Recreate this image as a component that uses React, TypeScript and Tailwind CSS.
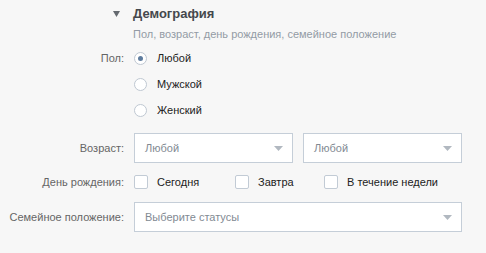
import { useState } from 'react'

function Radio({ checked, label, onClick }: { checked: boolean; label: string; onClick: () => void }) {
  return (
    <div className="flex h-[26px] items-center gap-[10px] cursor-pointer" onClick={onClick}>
      <span className="flex h-[13px] w-[13px] items-center justify-center rounded-full border border-[#bfc8d2] bg-white">
        {checked && <span className="h-[5px] w-[5px] rounded-full bg-[#5e7c9e]" />}
      </span>
      <span className="text-[#222]">{label}</span>
    </div>
  )
}

function Check({ label, width }: { label: string; width: string }) {
  const [on, setOn] = useState(false)
  return (
    <div className={'flex items-center gap-[9px] cursor-pointer ' + width} onClick={() => setOn(!on)}>
      <span className="flex h-[14px] w-[14px] items-center justify-center rounded-[2px] border border-[#c2cbd5] bg-white text-[10px] text-[#5e7c9e]">
        {on ? '✓' : ''}
      </span>
      <span className="text-[#222]">{label}</span>
    </div>
  )
}

function Select({ value, className }: { value: string; className: string }) {
  return (
    <div className={'flex h-[30px] items-center justify-between border border-[#c5ced8] bg-white pl-[10px] pr-[9px] ' + className}>
      <span className="text-[#828a93]">{value}</span>
      <svg width="9" height="5" viewBox="0 0 9 5">
        <path d="M0 0h9L4.5 5z" fill="#b1b8c0" />
      </svg>
    </div>
  )
}

export default function App() {
  const [sex, setSex] = useState(0)
  const sexes = ['Любой', 'Мужской', 'Женский']

  return (
    <div className="h-[253px] w-[486px] whitespace-nowrap bg-[#f7f7f7] text-[11px] leading-[14px]" style={{ fontFamily: '"Liberation Sans", Arial, sans-serif' }}>
      <div className="pt-[6px]">
        <div className="flex h-[16px] items-center">
          <div className="flex w-[133px] justify-end pr-[13px]">
            <svg width="7" height="6" viewBox="0 0 7 6">
              <path d="M0 0h7L3.5 6z" fill="#656a70" />
            </svg>
          </div>
          <span className="text-[13px] font-bold text-[#45484d]">Демография</span>
        </div>
        <div className="mt-[5px] pl-[133px] text-[#939ba5]">Пол, возраст, день рождения, семейное положение</div>
      </div>

      <div className="mt-[4px] grid grid-cols-[124px_1fr] gap-x-[10px]">
        <div className="flex h-[26px] items-center justify-end text-[#656565]">Пол:</div>
        <div className="flex flex-col">
          {sexes.map((s, i) => (
            <Radio key={s} label={s} checked={sex === i} onClick={() => setSex(i)} />
          ))}
        </div>
      </div>

      <div className="mt-[10px] grid grid-cols-[124px_1fr] items-center gap-x-[10px]">
        <div className="text-right text-[#656565]">Возраст:</div>
        <div className="flex gap-[10px]">
          <Select value="Любой" className="w-[159px]" />
          <Select value="Любой" className="w-[159px]" />
        </div>
      </div>

      <div className="mt-[9px] grid h-[20px] grid-cols-[124px_1fr] items-center gap-x-[10px]">
        <div className="text-right text-[#656565]">День рождения:</div>
        <div className="flex">
          <Check label="Сегодня" width="w-[101px]" />
          <Check label="Завтра" width="w-[89px]" />
          <Check label="В течение недели" width="w-[140px]" />
        </div>
      </div>

      <div className="mt-[10px] grid grid-cols-[124px_1fr] items-center gap-x-[10px]">
        <div className="text-right text-[#656565]">Семейное положение:</div>
        <Select value="Выберите статусы" className="w-[328px]" />
      </div>
    </div>
  )
}
